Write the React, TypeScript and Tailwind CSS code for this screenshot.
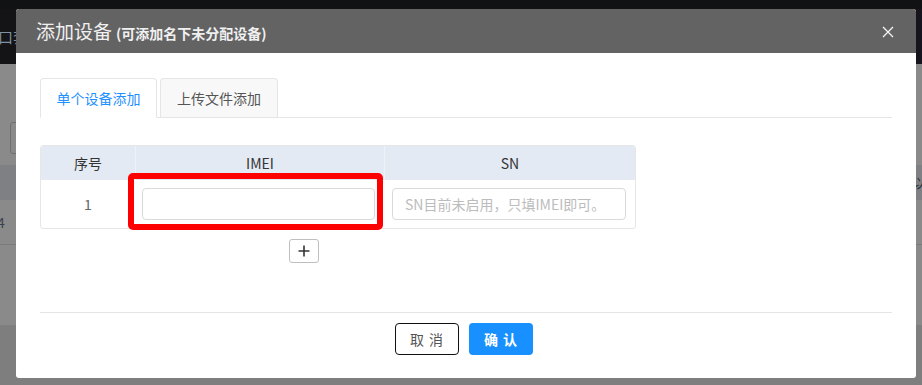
import React from "react";

const font = { fontFamily: '"Noto Sans CJK SC", "Noto Sans", sans-serif' };

export default function App() {
  return (
    <div
      className="relative w-[922px] h-[385px] overflow-hidden bg-[#8a8a8a]"
      style={font}
    >
      {/* background page under overlay */}
      <div className="flex flex-col w-full h-full">
        <div className="h-[9px] bg-[#111214]" />
        <div className="h-[55px] bg-[#141417] flex items-center justify-between">
          <span className="text-[15px] text-[#7d8fa3] -ml-[2px] leading-none">口套</span>
          <span className="w-[8px] h-full bg-[#17141d]" />
        </div>
        <div className="h-[101px] flex items-start">
          <div className="mt-[58px] ml-[10px] w-[10px] h-[32px] border border-[#6f6f6f] rounded-[3px]" />
        </div>
        <div className="h-[35px] bg-[#7e8083] flex items-center justify-end">
          <span className="text-[14px] text-[#2a3342] -mr-[4px]">以</span>
        </div>
        <div className="h-[45px] border-b border-[#7a7a7a] flex items-center">
          <span className="text-[14px] text-[#3a4150] -ml-[3px]">4</span>
        </div>
        <div className="h-[80px]" />
        <div className="flex-1 bg-[#7e7e7e]" />
      </div>

      {/* modal */}
      <div className="absolute left-[16px] top-[9px] w-[900px] h-[369px] bg-white rounded-[3px] overflow-hidden flex flex-col">
        <div className="h-[44px] bg-[#636363] flex items-center justify-between pl-[20px] pr-[22px]">
          <div className="flex items-baseline text-[#f0f0f0]">
            <span className="text-[19px]">添加设备</span>
            <span className="text-[14px] font-bold ml-[4px]">(可添加名下未分配设备)</span>
          </div>
          <svg width="12" height="12" viewBox="0 0 12 12" className="mt-[1px]">
            <path d="M1 1L11 11M11 1L1 11" stroke="#f2f2f2" strokeWidth="1.4" />
          </svg>
        </div>

        <div className="px-[24px] pt-[25px] flex flex-col flex-1">
          {/* tabs */}
          <div className="flex h-[40px] border-b border-[#e5e5e5]">
            <div className="w-[117px] h-[40px] border border-[#e5e5e5] border-b-white bg-white rounded-t-[4px] flex items-center justify-center text-[14px] text-[#1f90ff]">
              单个设备添加
            </div>
            <div className="ml-[3px] w-[118px] h-[39px] border border-b-0 border-[#e5e5e5] bg-[#f8f8f8] rounded-t-[4px] flex items-center justify-center text-[14px] text-[#555]">
              上传文件添加
            </div>
          </div>

          {/* table */}
          <div className="mt-[27px] w-[596px] border border-[#e6e6e6] rounded-[3px] overflow-visible">
            <div className="flex h-[34px] bg-[#e4eaf3] text-[14px] text-[#333] rounded-t-[3px]">
              <div className="w-[94px] flex items-center justify-center">序号</div>
              <div className="w-[249px] flex items-center justify-center border-l border-[#eef1f6]">IMEI</div>
              <div className="flex-1 flex items-center justify-center border-l border-[#eef1f6]">SN</div>
            </div>
            <div className="flex h-[48px] items-center text-[14px]">
              <div className="w-[94px] flex items-center justify-center text-[#666]">1</div>
              <div className="w-[249px] h-full relative flex items-center pl-[7px]">
                <div className="absolute left-[-7px] top-[-7px] w-[255px] h-[57px] border-[6px] border-[#ff0000] rounded-[5px]" />
                <div className="w-[233px] h-[32px] border border-[#d9d9d9] rounded-[4px] bg-white" />
              </div>
              <div className="flex-1 h-full flex items-center pl-[8px]">
                <div className="w-[234px] h-[32px] border border-[#d9d9d9] rounded-[4px] flex items-center pl-[12px] text-[14px] text-[#bcbcbc]">
                  SN目前未启用，只填IMEI即可。
                </div>
              </div>
            </div>
          </div>

          <div className="mt-[10px] ml-[249px] w-[30px] h-[24px] border border-[#bfbfbf] rounded-[3px] flex items-center justify-center">
            <svg width="12" height="12" viewBox="0 0 12 12">
              <path d="M6 0.5V11.5M0.5 6H11.5" stroke="#333" strokeWidth="1.6" />
            </svg>
          </div>

          <div className="mt-[49px] border-t border-[#e5e5e5]" />

          <div className="mt-[10px] flex justify-center gap-[10px] pr-[5px]">
            <div className="w-[64px] h-[32px] border border-[#111] rounded-[4px] flex items-center justify-center text-[14px] text-[#555] tracking-[5px] pl-[5px]">
              取消
            </div>
            <div className="w-[64px] h-[32px] bg-[#1890ff] rounded-[4px] flex items-center justify-center text-[14px] font-bold text-white tracking-[5px] pl-[5px]">
              确认
            </div>
          </div>
        </div>
      </div>
    </div>
  );
}
